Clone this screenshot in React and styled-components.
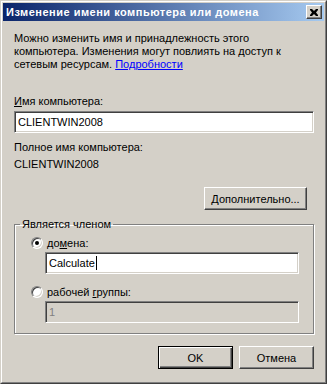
import React from 'react'
import styled, { createGlobalStyle } from 'styled-components'

const GlobalStyle = createGlobalStyle`
  html, body {
    margin: 0;
    padding: 0;
    background: #d4d0c8;
  }
  body {
    font-family: "Liberation Sans", Arial, sans-serif;
    font-size: 11px;
    color: #000;
  }
`;

const Window = styled.div`
  box-sizing: border-box;
  width: 327px;
  height: 384px;
  background: #d4d0c8;
  border-top: 1px solid #d4d0c8;
  border-left: 1px solid #d4d0c8;
  border-right: 1px solid #404040;
  border-bottom: 1px solid #404040;
  display: flex;
  flex-direction: column;
`;

const Frame = styled.div`
  flex: 1;
  display: flex;
  flex-direction: column;
  border-top: 1px solid #fff;
  border-left: 1px solid #fff;
  border-right: 1px solid #808080;
  border-bottom: 1px solid #808080;
  padding: 1px;
`;

const TitleBar = styled.div`
  height: 18px;
  display: flex;
  align-items: center;
  justify-content: space-between;
  padding: 0 2px 0 3px;
  background: linear-gradient(to right, #0a246a, #a6caf0);
  color: #fff;
  font-weight: bold;
  font-size: 11px;
  letter-spacing: 0.5px;
`;

const CloseButton = styled.div`
  box-sizing: border-box;
  width: 16px;
  height: 14px;
  background: #d4d0c8;
  border-top: 1px solid #fff;
  border-left: 1px solid #fff;
  border-right: 1px solid #404040;
  border-bottom: 1px solid #404040;
  box-shadow: inset -1px -1px 0 #808080;
  display: flex;
  align-items: center;
  justify-content: center;
`;

const Body = styled.div`
  display: flex;
  flex-direction: column;
  padding: 11px 10px 0 11px;
`;

const Intro = styled.p`
  margin: 0;
  line-height: 13px;
`;

const Link = styled.span`
  color: #0000ff;
  text-decoration: underline;
`;

const Label = styled.div`
  line-height: 13px;
  margin-top: ${p => p.$top || 0}px;
`;

const Key = styled.span`
  text-decoration: underline;
`;

const Field = styled.div`
  box-sizing: border-box;
  height: 22px;
  margin-top: ${p => p.$top || 0}px;
  margin-left: ${p => p.$indent || 0}px;
  background: ${p => p.$disabled ? '#d4d0c8' : '#fff'};
  color: ${p => p.$disabled ? '#808080' : '#000'};
  border-top: 1px solid #808080;
  border-left: 1px solid #808080;
  border-right: 1px solid #fff;
  border-bottom: 1px solid #fff;
  box-shadow: inset 1px 1px 0 #404040, inset -1px -1px 0 #d4d0c8;
  padding: 0 3px;
  display: flex;
  align-items: center;
`;

const Caret = styled.span`
  display: inline-block;
  width: 1px;
  height: 14px;
  background: #000;
  margin-left: 1px;
`;

const Value = styled.div`
  line-height: 13px;
  margin-top: 4px;
`;

const ButtonRow = styled.div`
  display: flex;
  justify-content: flex-end;
  gap: ${p => p.$gap || 0}px;
  margin-top: ${p => p.$top || 0}px;
  padding-right: ${p => p.$right || 0}px;
`;

const Button = styled.div`
  box-sizing: border-box;
  width: ${p => p.$width || 75}px;
  height: 23px;
  display: flex;
  align-items: center;
  justify-content: center;
  background: #d4d0c8;
  ${p => p.$default ? `
    border: 1px solid #000;
    box-shadow: inset 1px 1px 0 #fff, inset -1px -1px 0 #404040, inset -2px -2px 0 #808080;
  ` : `
    border-top: 1px solid #fff;
    border-left: 1px solid #fff;
    border-right: 1px solid #404040;
    border-bottom: 1px solid #404040;
    box-shadow: inset -1px -1px 0 #808080;
  `}
`;

const Group = styled.fieldset`
  box-sizing: border-box;
  margin: 8px 0 0 0;
  padding: 3px 14px 10px 16px;
  border: 1px solid #808080;
  box-shadow: 1px 1px 0 #fff, inset 1px 1px 0 #fff;
  display: flex;
  flex-direction: column;
  min-width: 0;
`;

const Legend = styled.legend`
  padding: 0 2px;
  margin-left: -11px;
  line-height: 13px;
`;

const RadioRow = styled.label`
  display: flex;
  align-items: center;
  gap: 4px;
  height: 13px;
  margin-top: ${p => p.$top || 0}px;
`;

const Radio = styled.span`
  box-sizing: border-box;
  width: 12px;
  height: 12px;
  border-radius: 50%;
  background: #fff;
  border: 1px solid;
  border-color: #808080 #fff #fff #808080;
  box-shadow: inset 1px 1px 0 #404040, inset -1px -1px 0 #d4d0c8;
  display: flex;
  align-items: center;
  justify-content: center;
  &::after {
    content: '';
    width: 4px;
    height: 4px;
    border-radius: 50%;
    background: ${p => p.$checked ? '#000' : 'transparent'};
  }
`;

export default function App() {
  return (
    <>
      <GlobalStyle />
      <Window>
        <Frame>
          <TitleBar>
            <span>Изменение имени компьютера или домена</span>
            <CloseButton>
              <svg width="8" height="7" viewBox="0 0 8 7">
                <path d="M0 0h2l2 2 2-2h2v1L6 3.5 8 6v1H6L4 5 2 7H0V6l2-2.5L0 1z" fill="#000" />
              </svg>
            </CloseButton>
          </TitleBar>
          <Body>
            <Intro>
              Можно изменить имя и принадлежность этого компьютера. Изменения
              могут повлиять на доступ к сетевым ресурсам. <Link>Подробности</Link>
            </Intro>
            <Label $top={24}><Key>И</Key>мя компьютера:</Label>
            <Field $top={3}>CLIENTWIN2008</Field>
            <Label $top={8}>Полное имя компьютера:</Label>
            <Value>CLIENTWIN2008</Value>
            <ButtonRow $top={16} $right={7}>
              <Button $width={103}><span><Key>Д</Key>ополнительно...</span></Button>
            </ButtonRow>
            <Group>
              <Legend>Является членом</Legend>
              <RadioRow $top={2}>
                <Radio $checked />
                <span>до<Key>м</Key>ена:</span>
              </RadioRow>
              <Field $top={3} $indent={14}>Calculate<Caret /></Field>
              <RadioRow $top={11}>
                <Radio />
                <span>рабочей <Key>г</Key>руппы:</span>
              </RadioRow>
              <Field $top={3} $indent={14} $disabled>1</Field>
            </Group>
            <ButtonRow $top={12} $gap={6}>
              <Button $default>OK</Button>
              <Button>Отмена</Button>
            </ButtonRow>
          </Body>
        </Frame>
      </Window>
    </>
  )
}
